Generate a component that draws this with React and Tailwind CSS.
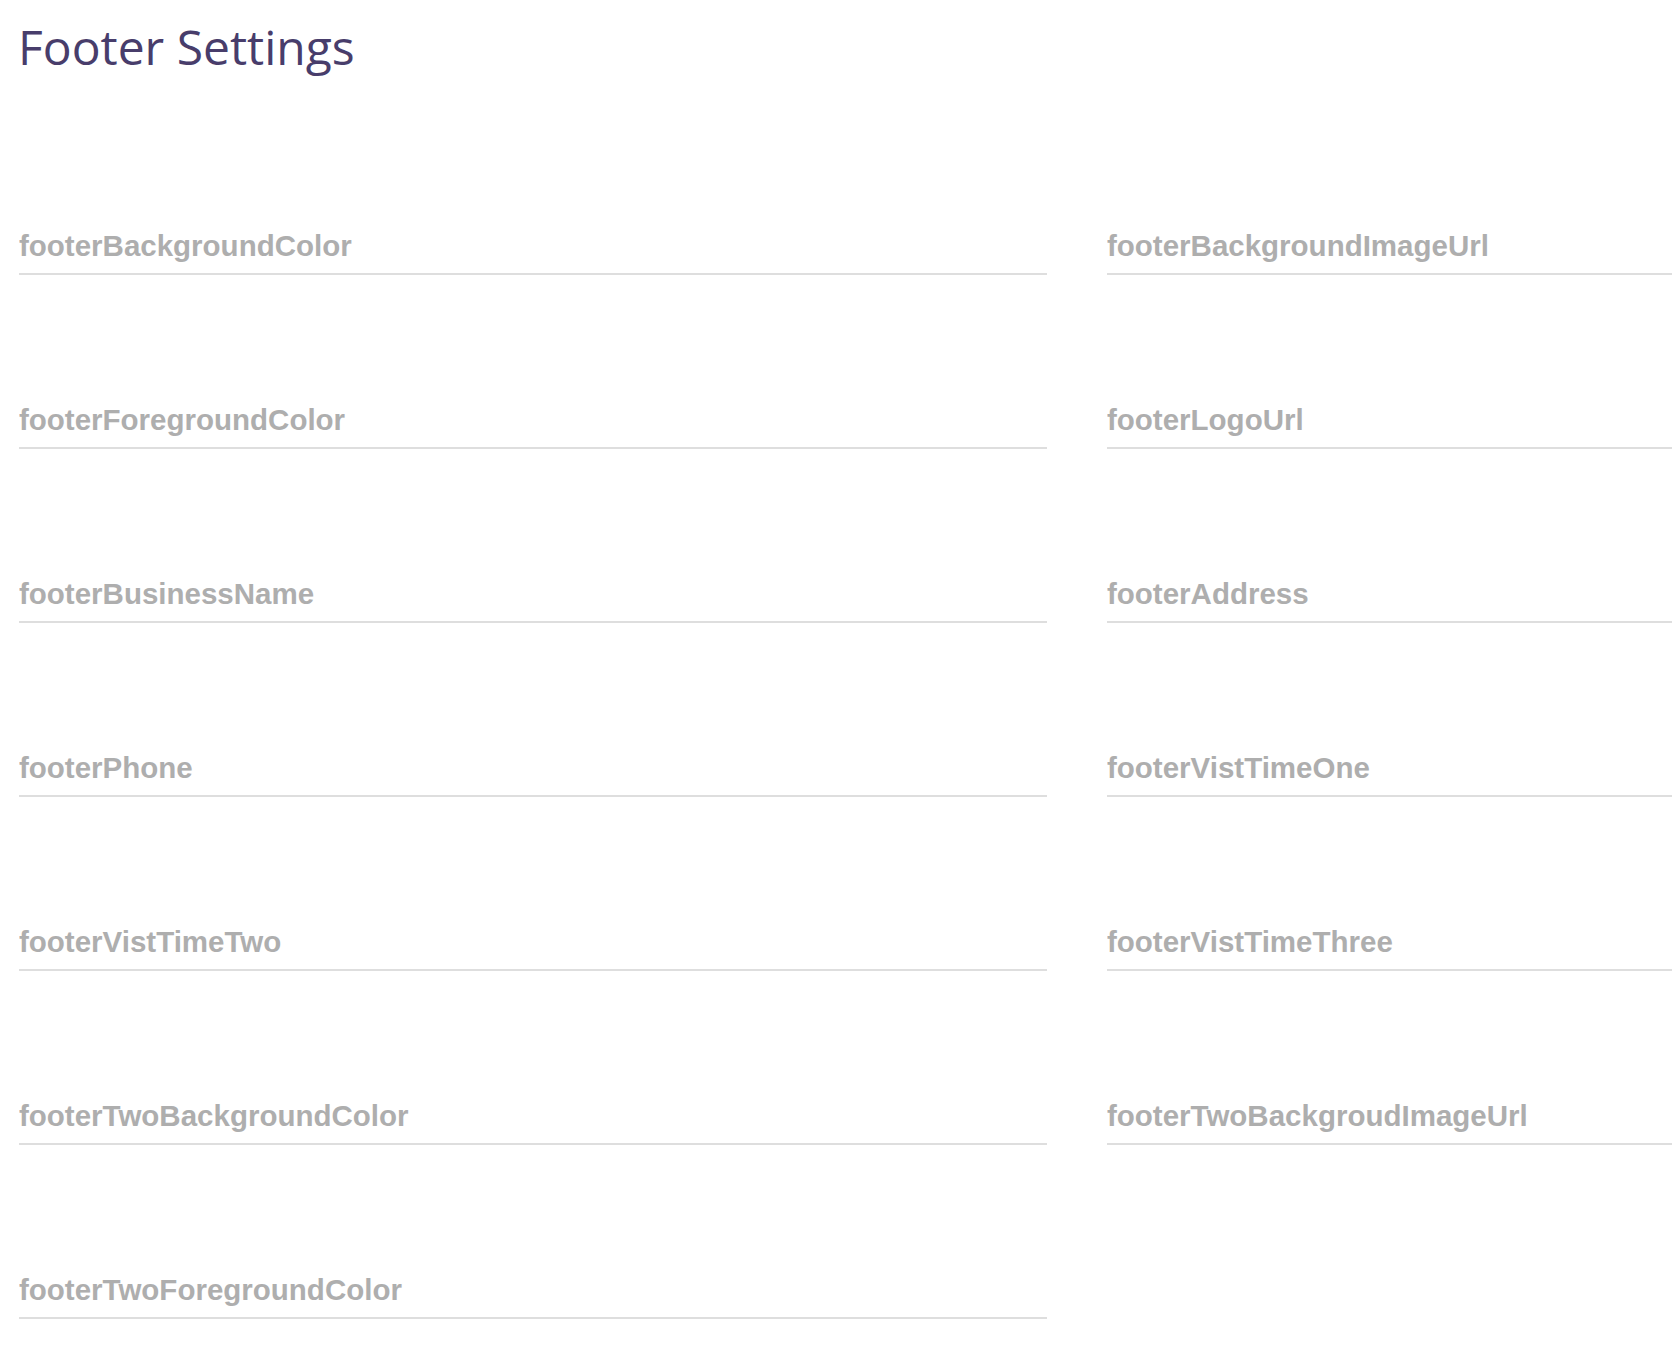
import { useState } from "react";

const fields = [
  "footerBackgroundColor",
  "footerBackgroundImageUrl",
  "footerForegroundColor",
  "footerLogoUrl",
  "footerBusinessName",
  "footerAddress",
  "footerPhone",
  "footerVistTimeOne",
  "footerVistTimeTwo",
  "footerVistTimeThree",
  "footerTwoBackgroundColor",
  "footerTwoBackgroudImageUrl",
  "footerTwoForegroundColor",
];

export default function App() {
  const [values, setValues] = useState({});

  const handleChange = (name, value) => {
    setValues((prev) => ({ ...prev, [name]: value }));
  };

  return (
    <div className="w-full min-h-screen overflow-hidden bg-white pl-[19px]">
      {/* Page title */}
      <div className="h-[101px] pt-[11px]">
        <h1
          className="-ml-px text-[48px] leading-[72px] font-normal text-[#483d6b]"
          style={{ fontFamily: '"Open Sans", sans-serif' }}
        >
          Footer Settings
        </h1>
      </div>

      {/* Settings form */}
      <div className="grid grid-cols-[1028px_1028px] gap-x-[60px]">
        {fields.map((name) => (
          <div key={name} className="h-[174px] flex items-end">
            <input
              type="text"
              name={name}
              value={values[name] || ""}
              onChange={(e) => handleChange(name, e.target.value)}
              placeholder={name}
              className="w-full h-[50px] pb-[7px] bg-transparent border-0 border-b-2 border-[#dedede] outline-none text-[29.5px] font-bold text-[#555] placeholder:text-[#aeaeae]"
              style={{ fontFamily: '"Liberation Sans", Arial, sans-serif' }}
            />
          </div>
        ))}
      </div>
    </div>
  );
}
